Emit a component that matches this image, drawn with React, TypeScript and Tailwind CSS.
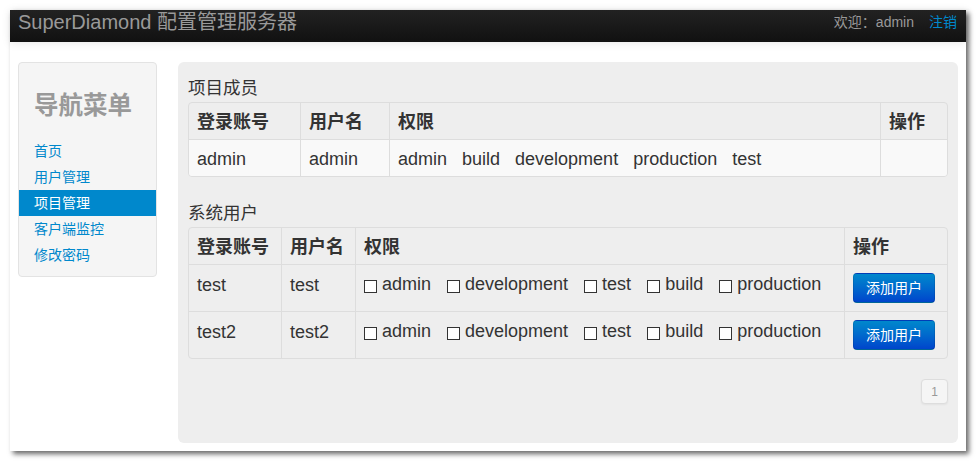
import React from "react";

const navLinks = ["首页", "用户管理", "项目管理", "客户端监控", "修改密码"];
const perms = ["admin", "development", "test", "build", "production"];
const sysUsers = [
  { login: "test", name: "test" },
  { login: "test2", name: "test2" },
];

function Checkbox() {
  return <span className="inline-block w-[13px] h-[13px] border border-[#333] bg-white mt-[6px] mr-[5px] shrink-0" />;
}

export default function App() {
  return (
    <div className="w-[977px] h-[462px] bg-white font-['Liberation_Sans','Noto_Sans_CJK_SC',sans-serif] text-[#333] pt-[10px] pl-[10px]">
      <div className="w-[956px] h-[441px] bg-white shadow-[3px_3px_5px_rgba(0,0,0,0.6)] flex flex-col">
        {/* navbar */}
        <div className="h-[32px] shrink-0 bg-linear-to-b from-[#222] to-[#111] shadow-[0_1px_10px_rgba(0,0,0,0.1)] flex justify-between pl-[8px] pr-[9px] pt-[2px] relative z-10">
          <div className="text-[20px] leading-[20px] text-[#999]">SuperDiamond 配置管理服务器</div>
          <div className="text-[14px] leading-[20px] flex gap-[15px]">
            <span className="text-[#999]">欢迎：admin</span>
            <span className="text-[#0088cc]">注销</span>
          </div>
        </div>

        {/* body */}
        <div className="flex px-[8px] pt-[20px] gap-[21px]">
          {/* sidebar */}
          <div className="w-[139px] h-[215px] shrink-0 bg-[#f5f5f5] border border-[#e3e3e3] rounded-[4px] pt-[8px]">
            <div className="h-[67px] flex items-center px-[15px] pt-[3px] text-[24.5px] font-bold text-[#999]">导航菜单</div>
            {navLinks.map((l) => (
              <div
                key={l}
                className={
                  l === "项目管理"
                    ? "h-[26px] py-[3px] px-[15px] text-[14px] leading-[20px] bg-[#0088cc] text-white"
                    : "h-[26px] py-[3px] px-[15px] text-[14px] leading-[20px] text-[#0088cc]"
                }
              >
                {l}
              </div>
            ))}
          </div>

          {/* main panel */}
          <div className="w-[780px] h-[381px] shrink-0 bg-[#eeeeee] rounded-[6px] px-[10px] pt-[16px] flex flex-col">
            <div className="text-[17.5px] leading-[20px] h-[20px] mb-[4px]">项目成员</div>
            <div className="border border-[#ddd] rounded-[4px] overflow-hidden text-[18px] leading-[20px]">
              <div className="flex h-[36px] font-bold">
                <div className="w-[111px] px-[8px] pt-[9px]">登录账号</div>
                <div className="w-[89px] px-[8px] pt-[9px] border-l border-[#ddd]">用户名</div>
                <div className="w-[491px] px-[8px] pt-[9px] border-l border-[#ddd]">权限</div>
                <div className="w-[67px] px-[8px] pt-[9px] border-l border-[#ddd]">操作</div>
              </div>
              <div className="flex h-[37px] border-t border-[#ddd] bg-[#f9f9f9]">
                <div className="w-[111px] px-[8px] pt-[9px]">admin</div>
                <div className="w-[89px] px-[8px] pt-[9px] border-l border-[#ddd]">admin</div>
                <div className="w-[491px] px-[8px] pt-[9px] border-l border-[#ddd] flex gap-[15px]">
                  <span>admin</span>
                  <span>build</span>
                  <span>development</span>
                  <span>production</span>
                  <span>test</span>
                </div>
                <div className="w-[67px] px-[8px] pt-[9px] border-l border-[#ddd]"></div>
              </div>
            </div>

            <div className="text-[17.5px] leading-[20px] h-[20px] mt-[26px] mb-[4px]">系统用户</div>
            <div className="border border-[#ddd] rounded-[4px] overflow-hidden text-[18px] leading-[20px]">
              <div className="flex h-[36px] font-bold">
                <div className="w-[92px] px-[8px] pt-[9px]">登录账号</div>
                <div className="w-[74px] px-[8px] pt-[9px] border-l border-[#ddd]">用户名</div>
                <div className="w-[489px] px-[8px] pt-[9px] border-l border-[#ddd]">权限</div>
                <div className="w-[103px] px-[8px] pt-[9px] border-l border-[#ddd]">操作</div>
              </div>
              {sysUsers.map((u) => (
                <div key={u.login} className="flex h-[47px] border-t border-[#ddd]">
                  <div className="w-[92px] px-[8px] pt-[10px]">{u.login}</div>
                  <div className="w-[74px] px-[8px] pt-[10px] border-l border-[#ddd]">{u.name}</div>
                  <div className="w-[489px] px-[8px] pt-[9px] border-l border-[#ddd] flex items-start gap-[16px]">
                    {perms.map((p) => (
                      <label key={p} className="flex items-start">
                        <Checkbox />
                        <span>{p}</span>
                      </label>
                    ))}
                  </div>
                  <div className="w-[103px] p-[8px] border-l border-[#ddd]">
                    <button className="w-[82px] h-[30px] rounded-[4px] bg-linear-to-b from-[#0088cc] to-[#0044cc] border border-[rgba(0,0,0,0.1)] border-b-[rgba(0,0,0,0.25)] text-white text-[14px] leading-[20px] font-['Liberation_Sans','Noto_Sans_CJK_SC',sans-serif]">
                      添加用户
                    </button>
                  </div>
                </div>
              ))}
            </div>

            <div className="flex justify-end mt-[20px]">
              <div className="w-[27px] h-[25px] border border-[#ddd] rounded-[4px] bg-[#f5f5f5] text-[#999] text-[12px] flex items-center justify-center shadow-[0_1px_2px_rgba(0,0,0,0.05)]">
                1
              </div>
            </div>
          </div>
        </div>
      </div>
    </div>
  );
}
